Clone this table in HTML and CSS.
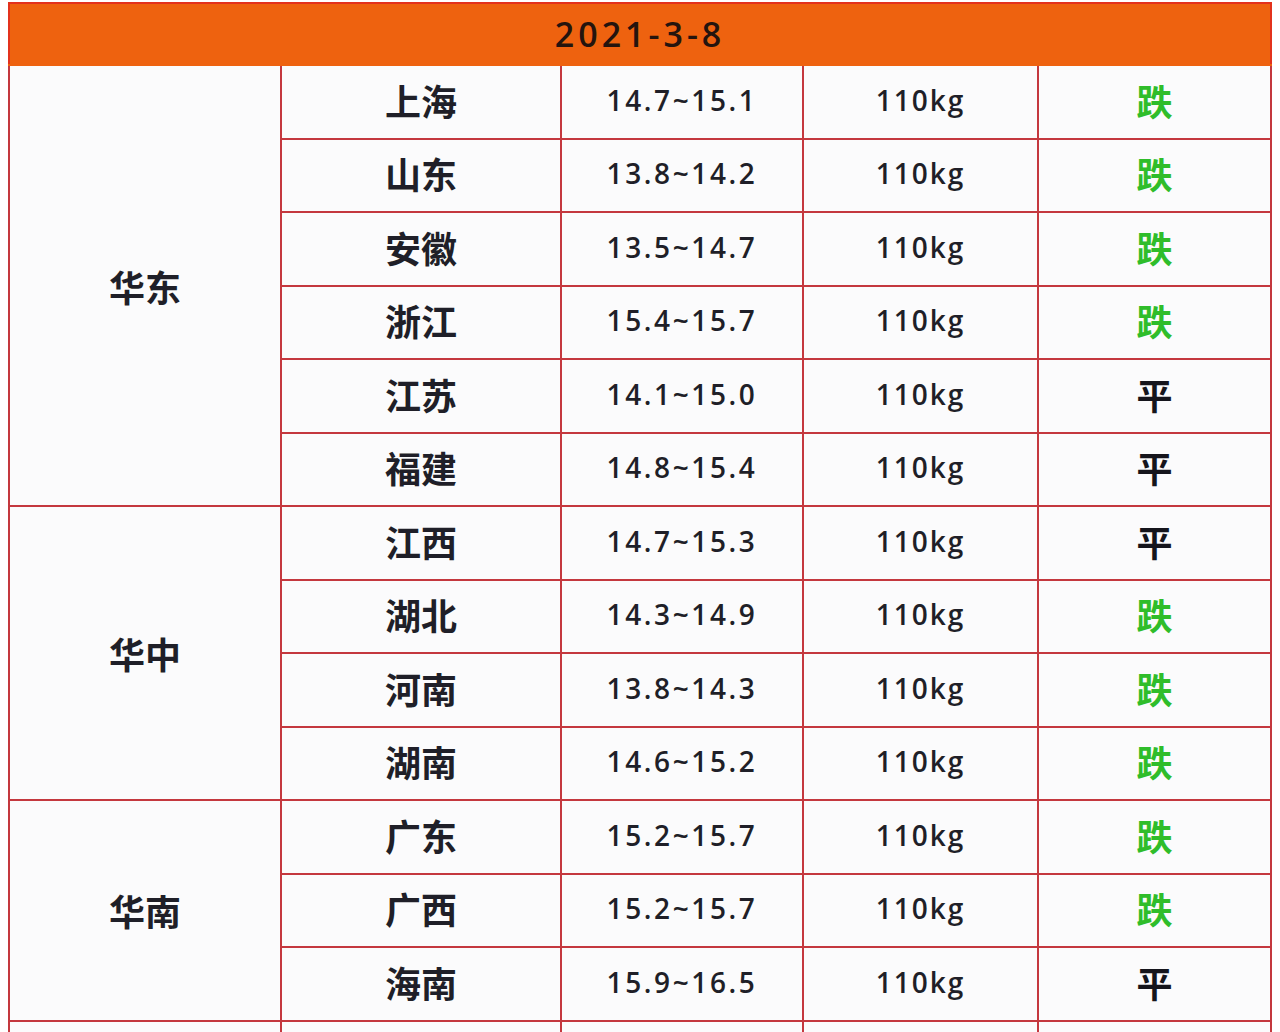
FILE: index.html
```html
<!DOCTYPE html>
<html lang="zh">
<head>
<meta charset="utf-8">
<title>2021-3-8 生猪价格</title>
<link rel="stylesheet" href="styles.css">
</head>
<body>
<div class="wrap">
<table class="price">
  <colgroup>
    <col class="c1"><col class="c2"><col class="c3"><col class="c4"><col class="c5">
  </colgroup>
  <thead>
    <tr><th colspan="5" class="date">2021-3-8</th></tr>
  </thead>
  <tbody>
    <tr><td class="region" rowspan="6">华东</td><td class="prov">上海</td><td class="num range">14.7~15.1</td><td class="num">110kg</td><td class="trend down">跌</td></tr>
    <tr><td class="prov">山东</td><td class="num range">13.8~14.2</td><td class="num">110kg</td><td class="trend down">跌</td></tr>
    <tr><td class="prov">安徽</td><td class="num range">13.5~14.7</td><td class="num">110kg</td><td class="trend down">跌</td></tr>
    <tr><td class="prov">浙江</td><td class="num range">15.4~15.7</td><td class="num">110kg</td><td class="trend down">跌</td></tr>
    <tr><td class="prov">江苏</td><td class="num range">14.1~15.0</td><td class="num">110kg</td><td class="trend flat">平</td></tr>
    <tr><td class="prov">福建</td><td class="num range">14.8~15.4</td><td class="num">110kg</td><td class="trend flat">平</td></tr>
    <tr><td class="region" rowspan="4">华中</td><td class="prov">江西</td><td class="num range">14.7~15.3</td><td class="num">110kg</td><td class="trend flat">平</td></tr>
    <tr><td class="prov">湖北</td><td class="num range">14.3~14.9</td><td class="num">110kg</td><td class="trend down">跌</td></tr>
    <tr><td class="prov">河南</td><td class="num range">13.8~14.3</td><td class="num">110kg</td><td class="trend down">跌</td></tr>
    <tr><td class="prov">湖南</td><td class="num range">14.6~15.2</td><td class="num">110kg</td><td class="trend down">跌</td></tr>
    <tr><td class="region" rowspan="3">华南</td><td class="prov">广东</td><td class="num range">15.2~15.7</td><td class="num">110kg</td><td class="trend down">跌</td></tr>
    <tr><td class="prov">广西</td><td class="num range">15.2~15.7</td><td class="num">110kg</td><td class="trend down">跌</td></tr>
    <tr><td class="prov">海南</td><td class="num range">15.9~16.5</td><td class="num">110kg</td><td class="trend flat">平</td></tr>
    <tr><td class="region"></td><td class="prov"></td><td class="num"></td><td class="num"></td><td class="trend"></td></tr>
  </tbody>
</table>
</div>
</body>
</html>
```
FILE: styles.css
```css
html, body {
  margin: 0;
  padding: 0;
  background: #ffffff;
}
body {
  height: 1032px;
  overflow: hidden;
}
.wrap {
  padding: 2px 10px 0 8px;
}
.price {
  width: 1262px;
  border-collapse: collapse;
  table-layout: fixed;
  background: #fbfbfc;
}
.c1 { width: 272px; }
.c2 { width: 280px; }
.c3 { width: 242px; }
.c4 { width: 235px; }
.c5 { width: 233px; }
.price td {
  border: 2px solid #c4383e;
  height: 67.5px;
  padding: 0 0 4px 0;
  text-align: center;
  vertical-align: middle;
  color: #1f1f28;
}
.date {
  height: 60px;
  padding: 0;
  background: #ee620f;
  border: 2px solid #e3321c;
  border-bottom-color: #ee620f;
  color: #24140e;
  font-family: "Open Sans", "Noto Sans", sans-serif;
  font-weight: 600;
  font-size: 34px;
  letter-spacing: 4px;
  text-align: center;
  vertical-align: middle;
}
.price tbody tr:first-child td {
  border-top: none;
}
.region, .prov, .trend {
  font-family: "Noto Sans CJK SC", "Noto Sans", sans-serif;
  font-weight: 700;
  font-size: 36px;
  line-height: 1;
}
.price td.region { padding: 2px 0; }
.num {
  font-family: "Open Sans", "Noto Sans", sans-serif;
  font-weight: 600;
  font-size: 28px;
  letter-spacing: 2px;
  line-height: 1;
}
.num.range { letter-spacing: 2.6px; }
.trend.down { color: #2fbd2a; }
.trend.flat { color: #15151c; }
```
